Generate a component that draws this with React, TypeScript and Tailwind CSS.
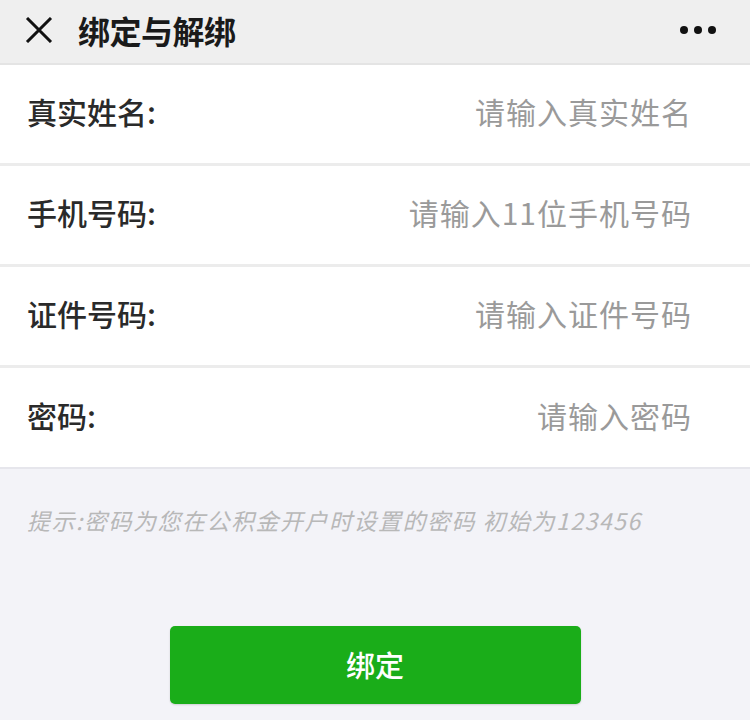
const rows = [
  { label: '真实姓名:', placeholder: '请输入真实姓名' },
  { label: '手机号码:', placeholder: '请输入11位手机号码' },
  { label: '证件号码:', placeholder: '请输入证件号码' },
  { label: '密码:', placeholder: '请输入密码' },
];

const App = () => {
  return (
    <div
      className="w-[750px] h-[720px] bg-[#f3f3f8] overflow-hidden"
      style={{ fontFamily: '"Noto Sans CJK SC", "Noto Sans", sans-serif' }}
    >
      {/* Top bar */}
      <div className="h-[65px] bg-[#efefef] border-b-2 border-[#e4e4e4] flex items-center pl-[25px] pr-[34px]">
        <svg width="28" height="26" viewBox="0 0 28 26" className="shrink-0 mb-[4px]">
          <path d="M2 1 L26 25 M26 1 L2 25" stroke="#111" strokeWidth="3" />
        </svg>
        <span className="ml-[25px] mb-[4px] text-[32px] font-bold text-[#1a1a1a] leading-none tracking-[-0.5px]">绑定与解绑</span>
        <div className="ml-auto flex gap-[6px] mb-[4px]">
          <span className="w-[8px] h-[8px] rounded-full bg-[#111]" />
          <span className="w-[8px] h-[8px] rounded-full bg-[#111]" />
          <span className="w-[8px] h-[8px] rounded-full bg-[#111]" />
        </div>
      </div>

      {/* Form rows */}
      <div className="bg-white">
        {rows.map((row, i) => (
          <div
            key={row.label}
            className={`h-[101px] flex items-center justify-between pl-[27px] pr-[58px] pb-[5px] ${i < rows.length - 1 ? 'border-b-[3px] border-[#ececec]' : 'border-b-2 border-[#e6e6ec]'}`}
          >
            <span className="text-[30px] font-medium text-[#2a2a2a]">{row.label}</span>
            <span className="text-[30px] text-[#9a9a9a] tracking-[1px]">{row.placeholder}</span>
          </div>
        ))}
      </div>

      {/* Hint */}
      <p className="mt-[34px] pl-[27px] text-[23px] italic text-[#b8b8b8] tracking-[1.5px]">
        提示:密码为您在公积金开户时设置的密码 初始为123456
      </p>

      {/* Submit */}
      <div className="flex justify-center mt-[88px]">
        <button className="w-[411px] h-[78px] rounded-[5px] bg-[#1aad19] text-white text-[29px] font-medium shadow-[0_1px_2px_rgba(0,0,0,0.15)]">
          绑定
        </button>
      </div>
    </div>
  );
};

export default App;
